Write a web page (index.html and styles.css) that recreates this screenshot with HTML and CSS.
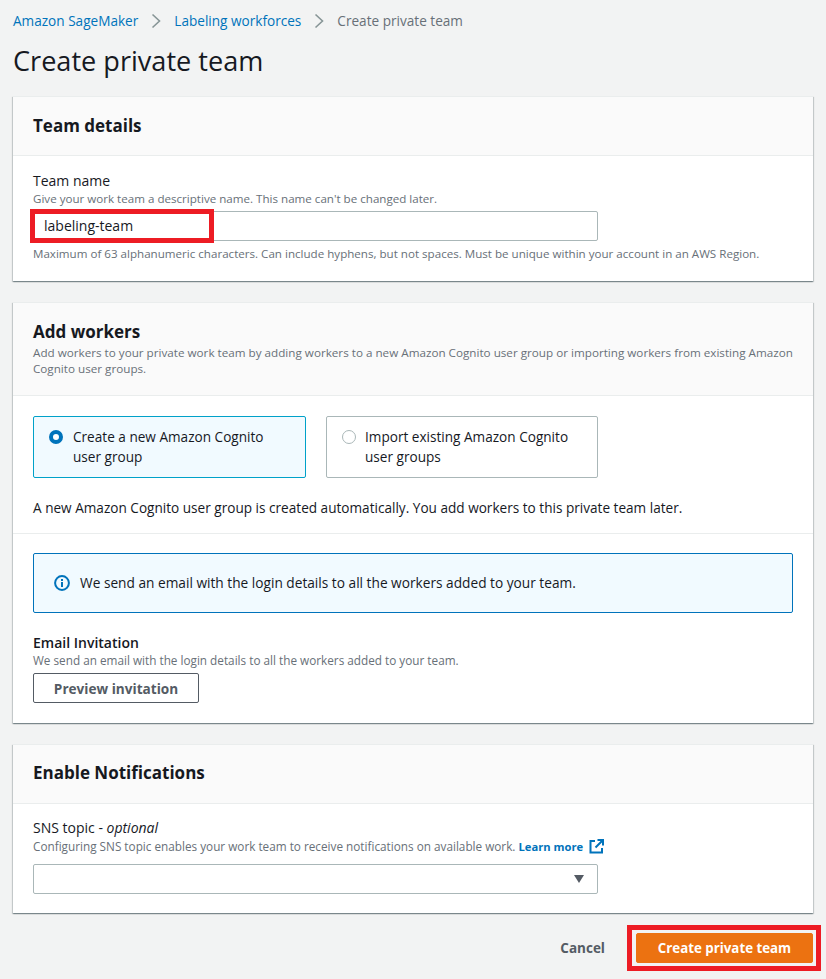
FILE: index.html
```html
<!DOCTYPE html>
<html lang="en">
<head>
  <meta charset="UTF-8">
  <title>Create private team</title>
  <link rel="stylesheet" href="styles.css">
</head>
<body>

  <!-- Breadcrumbs -->
  <nav class="crumbs">
    <a href="#">Amazon SageMaker</a>
    <svg class="crumb-sep" width="10" height="16" viewBox="0 0 10 16"><path d="M1.500 1.500 8.500 8l-7 6.500" fill="none" stroke="#879596" stroke-width="1.6"/></svg>
    <a href="#">Labeling workforces</a>
    <svg class="crumb-sep" width="10" height="16" viewBox="0 0 10 16"><path d="M1.500 1.500 8.500 8l-7 6.500" fill="none" stroke="#879596" stroke-width="1.6"/></svg>
    <span class="crumb-current">Create private team</span>
  </nav>

  <h1>Create private team</h1>

  <!-- Team details -->
  <section class="card card-team">
    <header class="card-head">
      <h2>Team details</h2>
    </header>
    <div class="card-body">
      <div class="label">Team name</div>
      <div class="hint">Give your work team a descriptive name. This name can't be changed later.</div>
      <div class="field">
        <div class="input">labeling-team</div>
        <div class="mark mark-input"></div>
      </div>
      <div class="hint hint-below">Maximum of 63 alphanumeric characters. Can include hyphens, but not spaces. Must be unique within your account in an AWS Region.</div>
    </div>
  </section>

  <!-- Add workers -->
  <section class="card card-workers">
    <header class="card-head">
      <h2>Add workers</h2>
      <p class="hint head-hint">Add workers to your private work team by adding workers to a new Amazon Cognito user group or importing workers from existing Amazon Cognito user groups.</p>
    </header>
    <div class="card-body body-options">
      <div class="tiles">
        <div class="tile tile-selected">
          <span class="radio radio-on"></span>
          <span>Create a new Amazon Cognito user group</span>
        </div>
        <div class="tile tile-plain">
          <span class="radio"></span>
          <span>Import existing Amazon Cognito user groups</span>
        </div>
      </div>
      <p class="tile-note">A new Amazon Cognito user group is created automatically. You add workers to this private team later.</p>
    </div>
    <div class="card-body body-invite">
      <div class="info">
        <svg width="16" height="16" viewBox="0 0 16 16"><circle cx="8" cy="8" r="6.900" fill="none" stroke="#0073bb" stroke-width="2"/><rect x="7" y="7" width="2" height="5" fill="#0073bb"/><rect x="7" y="4" width="2" height="2" fill="#0073bb"/></svg>
        <span>We send an email with the login details to all the workers added to your team.</span>
      </div>
      <div class="label label-bold">Email Invitation</div>
      <div class="hint hint-wide">We send an email with the login details to all the workers added to your team.</div>
      <button class="btn-outline">Preview invitation</button>
    </div>
  </section>

  <!-- Enable Notifications -->
  <section class="card card-notify">
    <header class="card-head">
      <h2>Enable Notifications</h2>
    </header>
    <div class="card-body body-sns">
      <div class="label">SNS topic - <em>optional</em></div>
      <div class="hint hint-wide">Configuring SNS topic enables your work team to receive notifications on available work. <a class="learn" href="#">Learn more</a>
        <svg class="ext" width="15" height="15" viewBox="0 0 15 15"><path d="M6 2H1.500v11.500H13V9" fill="none" stroke="#0073bb" stroke-width="2"/><path d="M8.500 1H14v5.500M14 1 6.500 8.500" fill="none" stroke="#0073bb" stroke-width="2"/></svg>
      </div>
      <div class="select"><span class="caret"></span></div>
    </div>
  </section>

  <!-- Actions -->
  <div class="actions">
    <button class="btn-cancel">Cancel</button>
    <div class="submit-wrap">
      <button class="btn-primary">Create private team</button>
      <div class="mark mark-submit"></div>
    </div>
  </div>

</body>
</html>
```

FILE: styles.css
```css
body {
  margin: 0;
  padding: 0 13px;
  height: 979px;
  box-sizing: border-box;
  overflow: hidden;
  background-color: #f2f3f3;
  color: #16191f;
  font-family: "Open Sans", "Noto Sans", sans-serif;
  font-size: 13.6px;
  line-height: 20px;
}

a {
  color: #0073bb;
  text-decoration: none;
}

/* Breadcrumbs */
.crumbs {
  display: flex;
  align-items: center;
  height: 20px;
  padding-top: 11px;
  font-size: 13.6px;
}
.crumb-sep {
  margin: 0 13px;
}
.crumb-current {
  color: #687078;
}

h1 {
  margin: 10px 0 0;
  height: 55px;
  font-size: 27.1px;
  line-height: 40px;
  font-weight: 400;
}

/* Cards */
.card {
  box-sizing: border-box;
  background-color: #fff;
  border-top: 1px solid #eaeded;
  box-shadow: 0 1px 1px 0 rgba(0, 28, 36, 0.3), 1px 1px 1px 0 rgba(0, 28, 36, 0.15), -1px 1px 1px 0 rgba(0, 28, 36, 0.15);
  margin-bottom: 21px;
}
.card-head {
  box-sizing: border-box;
  background-color: #fafafa;
  border-bottom: 1px solid #eaeded;
  padding: 17px 20px 0;
}
.card-head h2 {
  margin: 0;
  font-size: 17px;
  line-height: 23px;
  font-weight: 700;
}
.card-team .card-head {
  height: 59px;
}
.card-notify .card-head {
  height: 59px;
  padding-top: 16px;
}
.card-workers .card-head {
  height: 93px;
}
.card-body {
  padding: 15px 20px 0;
}
.card-team {
  height: 185px;
}
.card-workers {
  height: 421px;
}
.card-notify {
  height: 169px;
}

.label {
  font-size: 14px;
  line-height: 20px;
}
.label-bold {
  font-weight: 600;
  line-height: 19px;
}
.hint {
  color: #687078;
  font-size: 11.6px;
  line-height: 16px;
}
.hint-wide {
  font-size: 11.75px;
}
.head-hint {
  margin: 2px 0 0;
  font-size: 11.68px;
}
.hint-below {
  margin-top: 5px;
  white-space: nowrap;
}
.body-sns {
  padding-top: 13px;
}
.body-sns .label {
  line-height: 21px;
}

/* Inputs */
.field {
  position: relative;
  width: 565px;
  margin-top: 4px;
}
.input {
  box-sizing: border-box;
  height: 30px;
  padding: 4px 10px;
  border: 1px solid #aab7b8;
  border-radius: 2px;
  background-color: #fff;
  font-size: 14px;
}
.select {
  position: relative;
  box-sizing: border-box;
  width: 565px;
  height: 30px;
  margin-top: 9px;
  border: 1px solid #aab7b8;
  border-radius: 2px;
}
.caret {
  position: absolute;
  right: 13px;
  top: 10px;
  border-left: 5.5px solid transparent;
  border-right: 5.5px solid transparent;
  border-top: 8px solid #545b64;
}

/* Red annotation boxes */
.mark {
  position: absolute;
  box-sizing: border-box;
  border: 5px solid #ed1c24;
}
.mark-input {
  left: -3px;
  top: -2px;
  width: 184px;
  height: 34px;
}
.mark-submit {
  left: -9px;
  top: -8px;
  width: 194px;
  height: 46px;
}

/* Option tiles */
.body-options {
  box-sizing: border-box;
  height: 138px;
  padding-top: 20px;
  border-bottom: 1px solid #eaeded;
}
.tiles {
  display: flex;
  gap: 20px;
}
.tile {
  box-sizing: border-box;
  display: flex;
  gap: 10px;
  width: 273px;
  height: 62px;
  padding: 10px 15px;
  border: 1px solid #aab7b8;
  border-radius: 2px;
}
.tile-plain {
  width: 272px;
  gap: 9px;
}
.tile-selected {
  background-color: #f1faff;
  border-color: #00a1c9;
}
.radio {
  flex: none;
  box-sizing: border-box;
  width: 14px;
  height: 14px;
  margin-top: 3px;
  border: 1px solid #aab7b8;
  border-radius: 50%;
}
.radio-on {
  border: 4px solid #0073bb;
  background-color: #fff;
}
.tile-note {
  margin: 20px 0 0;
}

/* Invitation */
.body-invite {
  padding-top: 19px;
}
.info {
  box-sizing: border-box;
  display: flex;
  align-items: center;
  gap: 10px;
  height: 60px;
  padding: 0 20px;
  margin-bottom: 20px;
  border: 1px solid #0073bb;
  border-radius: 2px;
  background-color: #f1faff;
  font-size: 13.7px;
}
.btn-outline {
  display: block;
  box-sizing: border-box;
  width: 166px;
  height: 30px;
  margin-top: 5px;
  padding: 0;
  background-color: #fff;
  border: 1px solid #545b64;
  border-radius: 2px;
  color: #545b64;
  font: 700 13.6px "Open Sans", "Noto Sans", sans-serif;
}

.learn {
  font-size: 11.2px;
  font-weight: 700;
}
.ext {
  vertical-align: -3px;
  margin-left: 3px;
}

/* Bottom actions */
.actions {
  display: flex;
  justify-content: flex-end;
  align-items: center;
  gap: 31px;
  margin-top: -1px;
}
.submit-wrap {
  position: relative;
  display: flex;
}
.btn-cancel {
  padding: 0;
  background: none;
  border: 0;
  color: #545b64;
  font: 700 13.5px "Open Sans", "Noto Sans", sans-serif;
}
.btn-primary {
  box-sizing: border-box;
  width: 177px;
  height: 30px;
  padding: 0;
  background-color: #ec7211;
  border: 1px solid #ec7211;
  border-radius: 2px;
  color: #fff;
  font: 700 13.3px "Open Sans", "Noto Sans", sans-serif;
}
```
